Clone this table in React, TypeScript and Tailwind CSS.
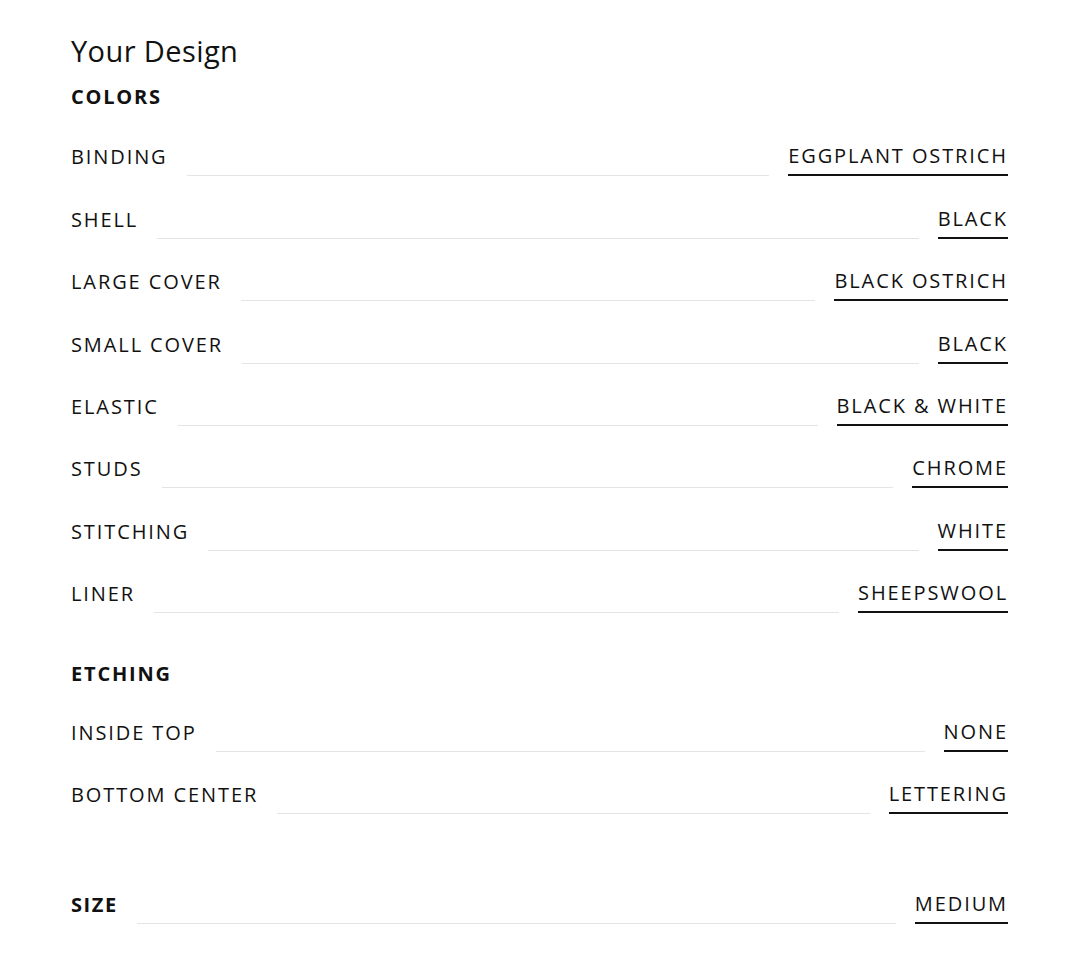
import React from "react";

type Row = { label: string; value: string };

const colors: Row[] = [
  { label: "BINDING", value: "EGGPLANT OSTRICH" },
  { label: "SHELL", value: "BLACK" },
  { label: "LARGE COVER", value: "BLACK OSTRICH" },
  { label: "SMALL COVER", value: "BLACK" },
  { label: "ELASTIC", value: "BLACK & WHITE" },
  { label: "STUDS", value: "CHROME" },
  { label: "STITCHING", value: "WHITE" },
  { label: "LINER", value: "SHEEPSWOOL" },
];

const etching: Row[] = [
  { label: "INSIDE TOP", value: "NONE" },
  { label: "BOTTOM CENTER", value: "LETTERING" },
];

function Line({ label, value, bold }: Row & { bold?: boolean }) {
  return (
    <div className="flex items-end h-[62.4px]">
      <span
        className={`text-[20px] leading-[20px] pb-[9px] whitespace-nowrap ${
          bold ? "font-bold tracking-[1.6px]" : "font-normal tracking-[1.9px]"
        }`}
      >
        {label}
      </span>
      <div className="flex-1 mx-[19px] border-b border-[#e4e4e4]" />
      <span className="text-[20px] leading-[20px] tracking-[1.9px] pb-[8px] border-b-2 border-[#111] whitespace-nowrap">
        {value}
      </span>
    </div>
  );
}

export default function App() {
  return (
    <div
      className="min-h-[955px] w-[1080px] bg-white text-[#111] pl-[71px] pr-[72px] pt-[33px]"
      style={{ fontFamily: '"Open Sans", "Liberation Sans", sans-serif' }}
    >
      <h1 className="text-[29px] leading-[36px] font-normal tracking-[0.4px]">Your Design</h1>
      <h2 className="mt-[18px] text-[20px] leading-[20px] font-bold tracking-[1.8px]">COLORS</h2>
      <div className="mt-[7px]">
        {colors.map((r) => (
          <Line key={r.label} {...r} />
        ))}
      </div>
      <h2 className="mt-[51px] text-[20px] leading-[20px] font-bold tracking-[1.8px]">ETCHING</h2>
      <div className="mt-[5px]">
        {etching.map((r) => (
          <Line key={r.label} {...r} />
        ))}
      </div>
      <div className="mt-[48px]">
        <Line label="SIZE" value="MEDIUM" bold />
      </div>
    </div>
  );
}
